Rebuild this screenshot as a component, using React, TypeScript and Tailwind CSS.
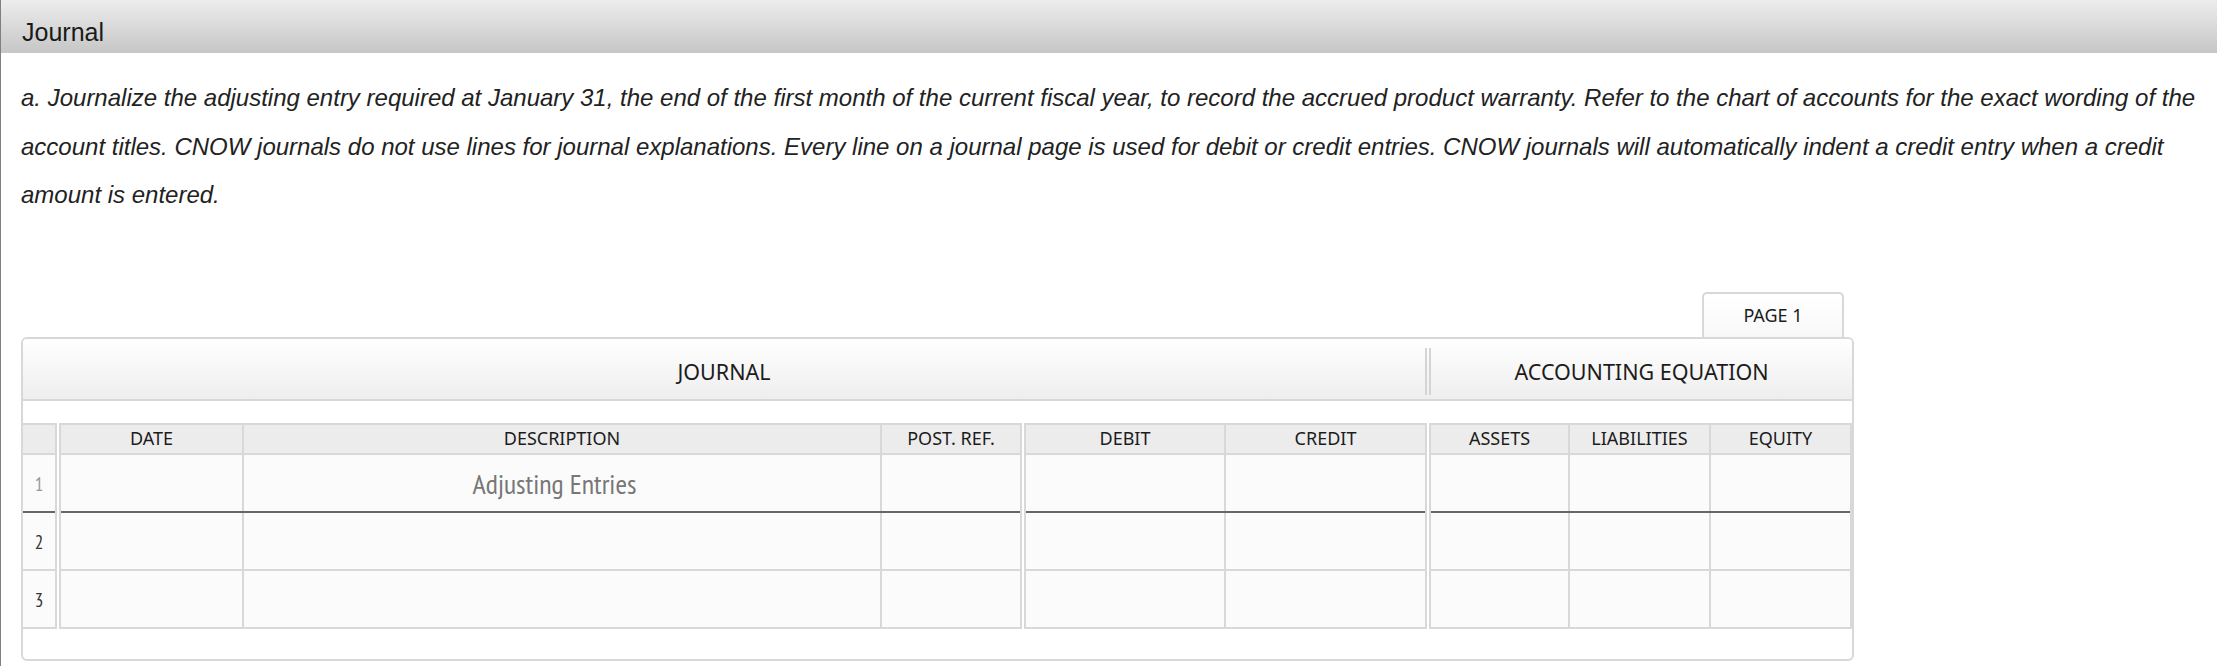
const groupBorder = "border-2 border-[#d8d8d8]";

function Cell({
  w,
  last,
  children,
}: {
  w: string;
  last?: boolean;
  children?: React.ReactNode;
}) {
  return (
    <div
      className={`${w} flex h-full items-center justify-center ${last ? "" : "border-r-2 border-[#d8d8d8]"}`}
    >
      {children}
    </div>
  );
}

type Col = { w: string; label: string };

function Group({
  cols,
  noLeft,
  rowNums,
  content,
}: {
  cols: Col[];
  noLeft?: boolean;
  rowNums?: boolean;
  content?: (rowIdx: number, colIdx: number) => React.ReactNode;
}) {
  const rows = [0, 1, 2];
  return (
    <div className={`${groupBorder} ${noLeft ? "border-l-0" : ""} flex flex-col`}>
      <div className="flex h-[30px] border-b-2 border-[#d8d8d8] bg-[#ececec] text-[18px] text-[#1c1c1c]">
        {cols.map((c, i) => (
          <Cell key={i} w={c.w} last={i === cols.length - 1}>
            {c.label}
          </Cell>
        ))}
      </div>
      {rows.map((r) => (
        <div
          key={r}
          className={`flex bg-[#fbfbfb] ${r === 0 ? "h-[58px] border-b-2 border-[#666666]" : r === 1 ? "h-[58px] border-b-2 border-[#d8d8d8]" : "h-[56px]"}`}
        >
          {cols.map((c, i) => (
            <Cell key={i} w={c.w} last={i === cols.length - 1}>
              {rowNums ? (
                <span
                  className={`pt-[3px] font-['PT_Sans_Narrow','Noto_Sans',sans-serif] text-[19px] ${r === 0 ? "text-[#999]" : "text-[#333]"}`}
                >
                  {r + 1}
                </span>
              ) : content ? (
                content(r, i)
              ) : null}
            </Cell>
          ))}
        </div>
      ))}
    </div>
  );
}

export default function App() {
  return (
    <div className="min-h-[666px] border-l border-[#808080] bg-white font-['Liberation_Sans',Arial,sans-serif]">
      <div className="h-[53px] bg-gradient-to-b from-[#ededed] to-[#c6c6c6] pl-[21px] pt-[18px] text-[25px] leading-[29px] text-[#1a1a1a]">
        Journal
      </div>
      <div className="pl-[20px] pr-[12px]">
        <p className="pt-[21px] text-[24px] italic leading-[48.5px] text-[#222]">
          a. Journalize the adjusting entry required at January 31, the end of the first month of the current fiscal
          year, to record the accrued product warranty. Refer to the chart of accounts for the exact wording of the
          account titles. CNOW journals do not use lines for journal explanations. Every line on a journal page is used
          for debit or credit entries. CNOW journals will automatically indent a credit entry when a credit amount is
          entered.
        </p>
        <div className="mt-[72px] w-[1833px] font-['Noto_Sans',sans-serif] text-[#1c1c1c]">
          <div className="flex justify-end pr-[10px]">
            <div className="flex h-[45px] w-[142px] items-center justify-center rounded-t-[5px] border-2 border-b-0 border-[#d8d8d8] bg-gradient-to-b from-white to-[#f8f8f8] text-[18px]">
              PAGE 1
            </div>
          </div>
          <div className="rounded-[6px] border-2 border-[#d8d8d8]">
            <div className="flex h-[62px] rounded-t-[4px] border-b-2 border-[#d8d8d8] bg-gradient-to-b from-white to-[#eeeeee]">
              <div className="flex w-[1402px] items-center justify-center pt-[7px] text-[21.5px]">JOURNAL</div>
              <div className="mt-[9px] h-[47px] w-[6px] border-x-2 border-[#d4d4d4]" />
              <div className="flex flex-1 items-center justify-center pt-[7px] text-[21.5px]">ACCOUNTING EQUATION</div>
            </div>
            <div className="flex gap-[2px] pb-[30px] pt-[22px]">
              <Group noLeft rowNums cols={[{ w: "w-[32px]", label: "" }]} />
              <Group
                cols={[
                  { w: "w-[183px]", label: "DATE" },
                  { w: "w-[638px]", label: "DESCRIPTION" },
                  { w: "w-[138px]", label: "POST. REF." },
                ]}
                content={(r, c) =>
                  r === 0 && c === 1 ? (
                    <span className="-ml-[15px] pt-[2px] font-['PT_Sans_Narrow','Roboto_Condensed',sans-serif] text-[28px] text-[#777]">
                      Adjusting Entries
                    </span>
                  ) : null
                }
              />
              <Group
                cols={[
                  { w: "w-[200px]", label: "DEBIT" },
                  { w: "w-[199px]", label: "CREDIT" },
                ]}
              />
              <Group
                cols={[
                  { w: "w-[139px]", label: "ASSETS" },
                  { w: "w-[141px]", label: "LIABILITIES" },
                  { w: "w-[139px]", label: "EQUITY" },
                ]}
              />
            </div>
          </div>
        </div>
      </div>
    </div>
  );
}
